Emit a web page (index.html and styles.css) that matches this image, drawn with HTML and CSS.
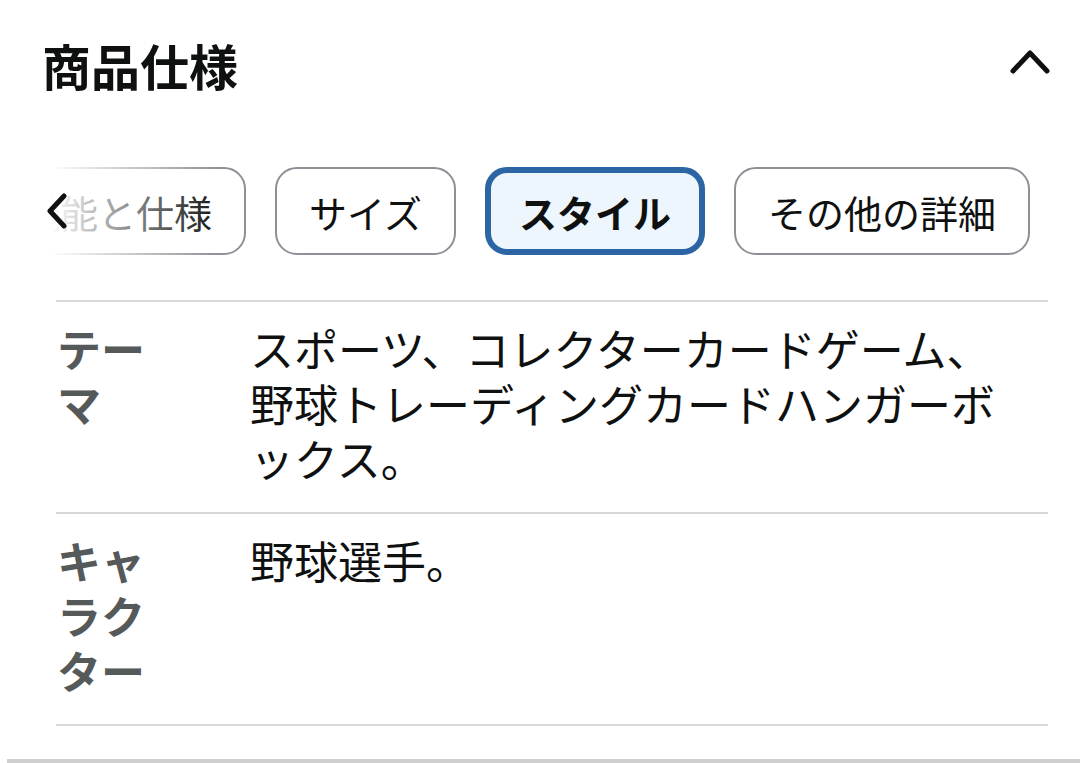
FILE: index.html
```html
<!DOCTYPE html>
<html lang="ja">
  <head>
    <meta charset="UTF-8" />
    <meta name="viewport" content="width=device-width, initial-scale=1.0" />
    <title>商品仕様</title>
    <link rel="stylesheet" href="styles.css">
  </head>
  <body>
    <section class="specs">
      <div class="specs-header">
        <h1>商品仕様</h1>
        <svg class="collapse" width="40" height="26" viewBox="0 0 40 26">
          <path d="M3 23 L20 5 L37 23" fill="none" stroke="#0f1111" stroke-width="5" stroke-linecap="round" stroke-linejoin="round" />
        </svg>
      </div>

      <div class="tabs">
        <div class="tabs-track">
          <button class="tab">機能と仕様</button>
          <button class="tab">サイズ</button>
          <button class="tab active">スタイル</button>
          <button class="tab">その他の詳細</button>
        </div>
        <div class="tabs-fade">
          <svg width="22" height="36" viewBox="0 0 22 36">
            <path d="M18 3 L4 18 L18 33" fill="none" stroke="#0f1111" stroke-width="5" stroke-linecap="round" stroke-linejoin="round" />
          </svg>
        </div>
      </div>

      <div class="spec-list">
        <div class="spec-row">
          <div class="spec-label">テーマ</div>
          <div class="spec-value">スポーツ、コレクターカードゲーム、野球トレーディングカードハンガーボックス。</div>
        </div>
        <div class="spec-row">
          <div class="spec-label">キャラクター</div>
          <div class="spec-value">野球選手。</div>
        </div>
      </div>
    </section>
    <div class="next-section"></div>
  </body>
</html>
```

FILE: styles.css
```css
* {
  margin: 0;
  padding: 0;
  box-sizing: border-box;
  font-family: "Noto Sans CJK JP", "Noto Sans", sans-serif;
}
body {
  background: #fff;
  color: #0f1111;
  overflow: hidden;
}
.specs {
  padding-top: 35px;
}
.specs-header {
  display: flex;
  justify-content: space-between;
  align-items: flex-start;
  padding: 0 30px 0 42px;
}
.specs-header h1 {
  font-size: 49px;
  line-height: 59px;
  font-weight: 700;
}
.collapse {
  margin-top: 13px;
}
.tabs {
  position: relative;
  margin-top: 73px;
  overflow: hidden;
}
.tabs-track {
  display: flex;
  gap: 29px;
  margin-left: -12px;
  width: max-content;
}
.tab {
  height: 88px;
  padding: 0 32px;
  border: 2px solid #8d9096;
  border-radius: 22px;
  background: #fff;
  color: #0f1111;
  font-size: 38px;
  font-weight: 400;
  white-space: nowrap;
}
.tab.active {
  padding: 0 28px;
  border: 6px solid #2b65a3;
  background: #edf5fd;
  font-weight: 700;
}
.tabs-fade {
  position: absolute;
  top: 0;
  left: 0;
  width: 240px;
  height: 100%;
  display: flex;
  align-items: center;
  padding-left: 46px;
  background: linear-gradient(to right, #fff 0, #fff 50px, rgba(255, 255, 255, 0.75) 90px, rgba(255, 255, 255, 0) 220px);
}
.spec-list {
  margin: 45px 32px 0 56px;
}
.spec-row {
  display: grid;
  grid-template-columns: 110px 1fr;
  column-gap: 83px;
  padding: 19px 30px 26px 1px;
  border-top: 2px solid #d5d9d9;
  font-size: 44px;
  line-height: 55px;
}
.spec-row:last-child {
  border-bottom: 2px solid #d5d9d9;
}
.spec-label {
  color: #565959;
  font-weight: 700;
}
.spec-value {
  color: #0f1111;
}
.next-section {
  margin: 33px 0 0 7px;
  border-top: 4px solid #cfcfcf;
}
```
